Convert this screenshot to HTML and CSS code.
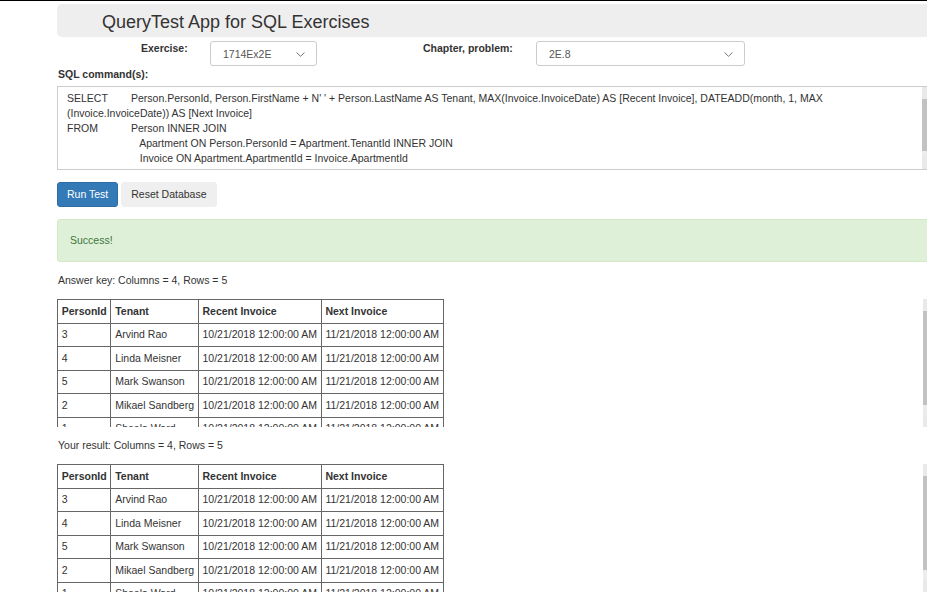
FILE: index.html
```html
<!DOCTYPE html>
<html lang="en">
<head>
<meta charset="utf-8">
<title>QueryTest App for SQL Exercises</title>
<link rel="stylesheet" href="styles.css">
</head>
<body>
<div class="topline"></div>
<div class="page">
  <div class="jumbo"><h1>QueryTest App for SQL Exercises</h1></div>

  <div class="form-row">
    <label class="lbl lbl-ex">Exercise:</label>
    <div class="select sel-ex">
      <span>1714Ex2E</span>
      <svg class="chev" width="9" height="5" viewBox="0 0 9 5"><path d="M0.5 0.5 L4.5 4.3 L8.5 0.5" fill="none" stroke="#777" stroke-width="1"/></svg>
    </div>
    <label class="lbl lbl-ch">Chapter, problem:</label>
    <div class="select sel-ch">
      <span>2E.8</span>
      <svg class="chev" width="9" height="5" viewBox="0 0 9 5"><path d="M0.5 0.5 L4.5 4.3 L8.5 0.5" fill="none" stroke="#777" stroke-width="1"/></svg>
    </div>
  </div>

  <div class="lbl sql-lbl">SQL command(s):</div>
  <div class="sqlbox">
    <textarea class="sql" spellcheck="false">SELECT	Person.PersonId, Person.FirstName + N' ' + Person.LastName AS Tenant, MAX(Invoice.InvoiceDate) AS [Recent Invoice], DATEADD(month, 1, MAX
(Invoice.InvoiceDate)) AS [Next Invoice]
FROM	Person INNER JOIN
	   Apartment ON Person.PersonId = Apartment.TenantId INNER JOIN
	   Invoice ON Apartment.ApartmentId = Invoice.ApartmentId
GROUP BY	Person.PersonId, Person.FirstName + N' ' + Person.LastName</textarea>
    <div class="vscroll vs-sql"><div class="vs-btn"></div><div class="vs-track"><div class="vs-thumb"></div></div><div class="vs-btn"></div></div>
  </div>

  <div class="buttons">
    <button class="btn btn-primary">Run Test</button>
    <button class="btn btn-default">Reset Database</button>
  </div>

  <div class="alert">Success!</div>

  <p class="count">Answer key: Columns = 4, Rows = 5</p>
  <div class="tablebox">
    <div class="tablewrap">
      <table>
        <tr><th>PersonId</th><th>Tenant</th><th>Recent Invoice</th><th>Next Invoice</th></tr>
        <tr><td>3</td><td>Arvind Rao</td><td>10/21/2018 12:00:00 AM</td><td>11/21/2018 12:00:00 AM</td></tr>
        <tr><td>4</td><td>Linda Meisner</td><td>10/21/2018 12:00:00 AM</td><td>11/21/2018 12:00:00 AM</td></tr>
        <tr><td>5</td><td>Mark Swanson</td><td>10/21/2018 12:00:00 AM</td><td>11/21/2018 12:00:00 AM</td></tr>
        <tr><td>2</td><td>Mikael Sandberg</td><td>10/21/2018 12:00:00 AM</td><td>11/21/2018 12:00:00 AM</td></tr>
        <tr><td>1</td><td>Sheela Ward</td><td>10/21/2018 12:00:00 AM</td><td>11/21/2018 12:00:00 AM</td></tr>
      </table>
    </div>
    <div class="vscroll vs-table"><div class="vs-btn"></div><div class="vs-track"><div class="vs-thumb"></div></div><div class="vs-btn"></div></div>
  </div>

  <p class="count">Your result: Columns = 4, Rows = 5</p>
  <div class="tablebox">
    <div class="tablewrap">
      <table>
        <tr><th>PersonId</th><th>Tenant</th><th>Recent Invoice</th><th>Next Invoice</th></tr>
        <tr><td>3</td><td>Arvind Rao</td><td>10/21/2018 12:00:00 AM</td><td>11/21/2018 12:00:00 AM</td></tr>
        <tr><td>4</td><td>Linda Meisner</td><td>10/21/2018 12:00:00 AM</td><td>11/21/2018 12:00:00 AM</td></tr>
        <tr><td>5</td><td>Mark Swanson</td><td>10/21/2018 12:00:00 AM</td><td>11/21/2018 12:00:00 AM</td></tr>
        <tr><td>2</td><td>Mikael Sandberg</td><td>10/21/2018 12:00:00 AM</td><td>11/21/2018 12:00:00 AM</td></tr>
        <tr><td>1</td><td>Sheela Ward</td><td>10/21/2018 12:00:00 AM</td><td>11/21/2018 12:00:00 AM</td></tr>
      </table>
    </div>
    <div class="vscroll vs-table"><div class="vs-btn"></div><div class="vs-track"><div class="vs-thumb"></div></div><div class="vs-btn"></div></div>
  </div>
</div>
</body>
</html>
```
FILE: styles.css
```css
html, body {
  margin: 0;
  padding: 0;
  overflow: hidden;
  background: #fff;
}
body {
  font-family: "Liberation Sans", Arial, sans-serif;
  font-size: 10.5px;
  line-height: 15px;
  color: #333;
}
.topline {
  height: 1px;
  background: #000;
}
.page {
  margin-left: 57px;
  width: 883px;
}
.jumbo {
  margin-top: 3px;
  height: 33px;
  background: #eee;
  border-radius: 5px 0 0 5px;
  display: flex;
  align-items: center;
  padding-left: 45px;
}
.jumbo h1 {
  margin: 0;
  font-size: 18px;
  font-weight: normal;
  line-height: 20px;
  color: #333;
  padding-top: 2px;
}
.form-row {
  display: flex;
  align-items: flex-start;
  margin-top: 4px;
  height: 25px;
}
.lbl {
  font-weight: bold;
  color: #333;
  line-height: 15px;
}
.lbl-ex {
  margin-left: 84px;
  width: 69px;
}
.lbl-ch {
  margin-left: 106px;
  width: 113px;
}
.select {
  position: relative;
  box-sizing: border-box;
  height: 25px;
  border: 1px solid #ccc;
  border-radius: 3px;
  display: flex;
  align-items: center;
  padding-left: 12px;
  padding-top: 1px;
  color: #555;
}
.sel-ex { width: 107px; }
.sel-ch { width: 209px; }
.chev {
  position: absolute;
  right: 11px;
  top: 10px;
}
.sql-lbl {
  margin-top: 1px;
  padding-left: 1px;
}
.sqlbox {
  position: relative;
  margin-top: 4px;
  height: 84px;
}
.sql {
  display: block;
  box-sizing: border-box;
  margin: 0;
  width: 883px;
  height: 84px;
  padding: 4px 26px 0 9px;
  border: 1px solid #ccc;
  border-radius: 0;
  font-family: "Liberation Sans", Arial, sans-serif;
  font-size: 10.5px;
  line-height: 15px;
  color: #333;
  white-space: pre;
  tab-size: 64px;
  -moz-tab-size: 64px;
  overflow: hidden;
  resize: none;
  outline: none;
}
.vscroll {
  position: absolute;
  top: 0;
  bottom: 0;
  right: 0;
  width: 17px;
  display: flex;
  flex-direction: column;
  background: #f0f0f0;
}
.vs-sql {
  top: 1px;
  bottom: 1px;
  right: 1px;
}
.vs-btn {
  height: 12px;
  flex: none;
  background: #e9e9e9;
}
.vs-track {
  flex: 1;
  background: #ececec;
  position: relative;
}
.vs-thumb {
  background: #c2c2c2;
}
.vs-sql .vs-thumb { height: 52px; }
.vs-table .vs-thumb { height: 94px; }
.buttons {
  display: flex;
  gap: 3px;
  margin-top: 12px;
}
.btn {
  box-sizing: border-box;
  height: 25px;
  padding: 0 9px;
  font-family: "Liberation Sans", Arial, sans-serif;
  font-size: 10.5px;
  line-height: 15px;
  border-radius: 3px;
  border: 1px solid transparent;
  white-space: nowrap;
  cursor: pointer;
}
.btn-primary {
  background: #337ab7;
  border-color: #2e6da4;
  color: #fff;
}
.btn-default {
  background: #efefef;
  border-color: #efefef;
  color: #333;
}
.alert {
  box-sizing: border-box;
  margin-top: 12px;
  height: 43px;
  padding: 13px 12px;
  background: #dff0d8;
  border: 1px solid #d6e9c6;
  border-radius: 3px 0 0 3px;
  color: #3c763d;
}
.count {
  margin: 11px 0 11px 1px;
  line-height: 15px;
}
.tablebox {
  position: relative;
  height: 128px;
}
.tablewrap {
  height: 128px;
  overflow: hidden;
}
table {
  border-collapse: collapse;
  color: #333;
}
th, td {
  border: 1px solid #666;
  padding: 3.75px 3.75px;
  line-height: 15px;
  text-align: left;
  white-space: nowrap;
  font-size: 10.5px;
}
th {
  font-weight: bold;
}
```
